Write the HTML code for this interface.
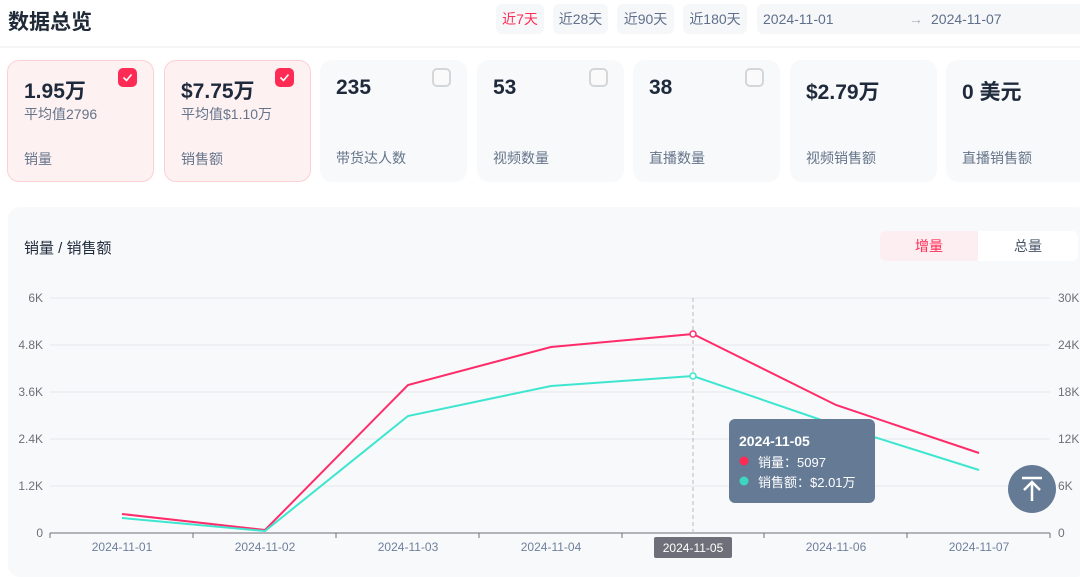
<!DOCTYPE html>
<html><head><meta charset="utf-8"><style>
*{margin:0;padding:0;box-sizing:border-box}
body{width:1080px;height:572px;overflow:hidden;background:#fff;font-family:"Liberation Sans","Noto Sans CJK SC",sans-serif;position:relative}
.t{position:absolute;left:8px;top:6px;font-size:21px;font-weight:bold;color:#1f2937}
.btn{position:absolute;top:4px;height:30px;line-height:30px;background:#f6f7f9;border-radius:6px;font-size:14px;color:#5f6f8c;text-align:center}
.hr{position:absolute;left:0;right:0;top:46px;height:2px;background:#f5f5f7}
.card{position:absolute;top:60px;width:147px;height:122px;border-radius:12px;background:#f8f9fa}
.card.on{background:#fef1f2;border:1px solid #fbd0d5}
.card .v{position:absolute;left:16px;top:16px;font-size:21px;font-weight:bold;color:#1e293b}
.card.on .v{top:14px}
.card .a{position:absolute;left:16px;top:43px;font-size:14px;color:#64748b}
.card .l{position:absolute;left:16px;top:88px;font-size:14px;color:#64748b}
.cb{position:absolute;right:16px;top:8px;width:19px;height:19px;border-radius:5px;border:2px solid #d4d6da;background:#fafafa}
.cb.on{background:#fe2c55;border-color:#fe2c55}
.chart{position:absolute;left:8px;top:207px;width:1080px;height:370px;background:#f8f9fa;border-radius:12px}
</style></head><body>
<div class="t">数据总览</div>
<div class="btn" style="left:496px;width:48px;color:#fe2c55">近7天</div>
<div class="btn" style="left:553px;width:55px">近28天</div>
<div class="btn" style="left:617px;width:57px">近90天</div>
<div class="btn" style="left:683px;width:64px">近180天</div>
<div class="btn" style="left:757px;width:330px;text-align:left;padding-left:6px">2024-11-01<span style="position:absolute;left:152px;color:#aab">→</span><span style="position:absolute;left:174px">2024-11-07</span></div>
<div class="hr"></div>

<div class="card on" style="left:7px"><div class="v">1.95万</div><div class="a">平均值2796</div><div class="l">销量</div><div class="cb on" style="top:7px"><svg width="15" height="15" viewBox="0 0 15 15"><path d="M3.5 7.5l3 3 5-6" stroke="#fff" stroke-width="1.6" fill="none"/></svg></div></div>
<div class="card on" style="left:164px"><div class="v">$7.75万</div><div class="a">平均值$1.10万</div><div class="l">销售额</div><div class="cb on" style="top:7px"><svg width="15" height="15" viewBox="0 0 15 15"><path d="M3.5 7.5l3 3 5-6" stroke="#fff" stroke-width="1.6" fill="none"/></svg></div></div>
<div class="card" style="left:320px"><div class="v">235</div><div class="l">带货达人数</div><div class="cb"></div></div>
<div class="card" style="left:477px"><div class="v">53</div><div class="l">视频数量</div><div class="cb"></div></div>
<div class="card" style="left:633px"><div class="v">38</div><div class="l">直播数量</div><div class="cb"></div></div>
<div class="card" style="left:790px"><div class="v">$2.79万</div><div class="l">视频销售额</div></div>
<div class="card" style="left:946px"><div class="v">0 美元</div><div class="l">直播销售额</div></div>

<div class="chart"></div>
<div style="position:absolute;left:24px;top:237px;font-size:15px;color:#1e293b">销量 / 销售额</div>
<div style="position:absolute;left:880px;top:231px;width:98px;height:30px;line-height:30px;background:#fdeff1;color:#fe2c55;font-size:14px;text-align:center;border-radius:6px 0 0 6px">增量</div>
<div style="position:absolute;left:978px;top:231px;width:100px;height:30px;line-height:30px;background:#fff;color:#475569;font-size:14px;text-align:center;border-radius:0 6px 6px 0">总量</div>

<svg style="position:absolute;left:0;top:0" width="1080" height="572" font-family="Liberation Sans" font-size="12">
<g stroke="#e3e6ef" stroke-width="1">
<line x1="50" y1="298" x2="1050" y2="298"/><line x1="50" y1="345" x2="1050" y2="345"/><line x1="50" y1="392" x2="1050" y2="392"/><line x1="50" y1="439" x2="1050" y2="439"/><line x1="50" y1="486" x2="1050" y2="486"/>
</g>
<line x1="50" y1="533" x2="1050" y2="533" stroke="#6e7079"/>
<g stroke="#6e7079"><line x1="50" y1="533" x2="50" y2="538"/><line x1="193" y1="533" x2="193" y2="538"/><line x1="336" y1="533" x2="336" y2="538"/><line x1="479" y1="533" x2="479" y2="538"/><line x1="622" y1="533" x2="622" y2="538"/><line x1="764" y1="533" x2="764" y2="538"/><line x1="907" y1="533" x2="907" y2="538"/><line x1="1050" y1="533" x2="1050" y2="538"/></g>
<line x1="693" y1="298" x2="693" y2="533" stroke="#bbb" stroke-dasharray="4,3"/>
<g fill="#6e7079" text-anchor="end"><text x="43" y="302">6K</text><text x="43" y="349">4.8K</text><text x="43" y="396">3.6K</text><text x="43" y="443">2.4K</text><text x="43" y="490">1.2K</text><text x="43" y="537">0</text></g>
<g fill="#6e7079"><text x="1058" y="302">30K</text><text x="1058" y="349">24K</text><text x="1058" y="396">18K</text><text x="1058" y="443">12K</text><text x="1058" y="490">6K</text><text x="1058" y="537">0</text></g>
<g fill="#6e7f9c" text-anchor="middle"><text x="122" y="551">2024-11-01</text><text x="265" y="551">2024-11-02</text><text x="408" y="551">2024-11-03</text><text x="551" y="551">2024-11-04</text><text x="836" y="551">2024-11-06</text><text x="979" y="551">2024-11-07</text></g>
<rect x="654" y="537" width="78" height="21" rx="2" fill="#6e7079"/><text x="693" y="552" fill="#fff" text-anchor="middle">2024-11-05</text>
<polyline points="122,514 265,530 408,385 551,347 693,334 836,405 979,453" fill="none" stroke="#fe2c6a" stroke-width="2"/>
<polyline points="122,518 265,531 408,416 551,386 693,376 836,425 979,470" fill="none" stroke="#3ee6d0" stroke-width="2"/>
<circle cx="693" cy="334" r="3" fill="#fff" stroke="#fe2c6a" stroke-width="1.5"/>
<circle cx="693" cy="376" r="3" fill="#fff" stroke="#3ee6d0" stroke-width="1.5"/>
<rect x="729" y="419" width="146" height="84" rx="6" fill="#647a95"/>
<text x="739" y="446" fill="#fff" font-weight="bold" font-size="14">2024-11-05</text>
<circle cx="744" cy="461" r="4.5" fill="#fe2c55"/><text x="758" y="467" fill="#fff" font-size="13" font-family="Liberation Sans,Noto Sans CJK SC">销量：5097</text>
<circle cx="744" cy="481" r="4.5" fill="#3ed6c0"/><text x="758" y="487" fill="#fff" font-size="13" font-family="Liberation Sans,Noto Sans CJK SC">销售额：$2.01万</text>
<circle cx="1032" cy="489" r="24" fill="#647a95"/>
<path d="M1022 478h20M1032 501v-18M1024 490l8-8 8 8" stroke="#fff" stroke-width="2.5" fill="none"/>
</svg>
</body></html>
